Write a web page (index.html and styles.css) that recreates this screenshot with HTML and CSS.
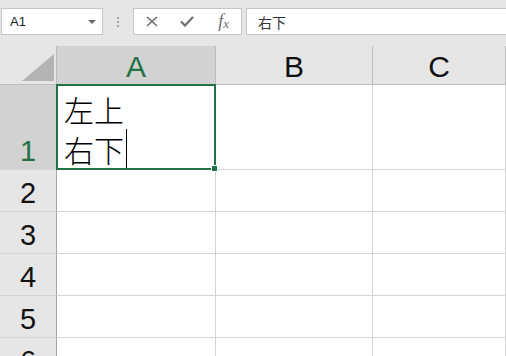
FILE: index.html
```html
<!DOCTYPE html>
<html lang="ja">
<head>
    <meta charset="UTF-8">
    <meta name="viewport" content="width=device-width, initial-scale=1.0">
    <title>Book1 - Excel</title>
    <link rel="stylesheet" href="styles.css">
</head>
<body>
    <div class="toolbar">
        <div class="name-box">
            <span>A1</span>
            <span class="arrow"></span>
        </div>
        <div class="grip"><i></i><i></i><i></i></div>
        <div class="fx-buttons">
            <span class="btn">
                <svg width="12" height="11" viewBox="0 0 12 11"><path d="M1 1 L11 10 M11 1 L1 10" stroke="#6e6e6e" stroke-width="1.6" fill="none"/></svg>
            </span>
            <span class="btn">
                <svg width="14" height="11" viewBox="0 0 14 11"><path d="M1 5.5 L5 9.5 L13 1" stroke="#6e6e6e" stroke-width="2.2" fill="none"/></svg>
            </span>
            <span class="btn fx"><i>f</i><i class="x">x</i></span>
        </div>
        <div class="formula">右下</div>
    </div>

    <div class="sheet">
        <div class="corner"><span class="triangle"></span></div>
        <div class="col-head active">A</div>
        <div class="col-head">B</div>
        <div class="col-head">C</div>

        <div class="row-head active">1</div>
        <div class="cell a1">
            左上<br>右下<span class="caret"></span>
            <div class="selection"></div>
            <div class="handle"></div>
        </div>
        <div class="cell"></div>
        <div class="cell"></div>

        <div class="row-head">2</div>
        <div class="cell"></div>
        <div class="cell"></div>
        <div class="cell"></div>

        <div class="row-head">3</div>
        <div class="cell"></div>
        <div class="cell"></div>
        <div class="cell"></div>

        <div class="row-head">4</div>
        <div class="cell"></div>
        <div class="cell"></div>
        <div class="cell"></div>

        <div class="row-head">5</div>
        <div class="cell"></div>
        <div class="cell"></div>
        <div class="cell"></div>

        <div class="row-head">6</div>
        <div class="cell"></div>
        <div class="cell"></div>
        <div class="cell"></div>
    </div>
</body>
</html>
```

FILE: styles.css
```css
body {
    margin: 0;
    padding: 0;
    height: 356px;
    overflow: hidden;
    background-color: #fff;
    font-family: "Liberation Sans", Arial, "Noto Sans CJK JP", sans-serif;
}
.toolbar {
    height: 46px;
    box-sizing: border-box;
    padding-top: 8px;
    background-color: #e6e6e6;
    display: flex;
    align-items: flex-start;
}
.name-box, .fx-buttons, .formula {
    height: 27px;
    box-sizing: border-box;
    background-color: #fff;
    border: 1px solid #c6c6c6;
    display: flex;
    align-items: center;
}
.name-box {
    width: 102px;
    margin-left: 1px;
    padding: 0 6px 0 8px;
    justify-content: space-between;
    font-size: 13px;
    color: #222;
}
.arrow {
    width: 0;
    height: 0;
    border-left: 4px solid transparent;
    border-right: 4px solid transparent;
    border-top: 4px solid #6a6a6a;
}
.grip {
    width: 30px;
    height: 27px;
    display: flex;
    flex-direction: column;
    align-items: center;
    justify-content: center;
    gap: 2px;
}
.grip i {
    width: 2px;
    height: 2px;
    background-color: #a6a6a6;
}
.fx-buttons {
    width: 109px;
    padding-left: 1px;
}
.btn {
    width: 36px;
    display: flex;
    justify-content: center;
    align-items: center;
}
.fx {
    font-family: "Liberation Serif", "Times New Roman", serif;
    color: #6e6e6e;
    font-size: 18px;
    padding-left: 2px;
}
.fx .x {
    font-size: 13px;
    margin-top: 4px;
}
.formula {
    flex: 1;
    margin-left: 4px;
    border-right: none;
    padding-left: 11px;
    font-family: "Noto Sans CJK JP", sans-serif;
    font-size: 14px;
    color: #333;
}

.sheet {
    display: grid;
    grid-template-columns: 57px 159px 157px 1fr;
    grid-template-rows: 39px 85px repeat(5, 42px);
}
.corner, .col-head, .row-head, .cell {
    box-sizing: border-box;
    border-right: 1px solid #d4d4d4;
    border-bottom: 1px solid #d4d4d4;
}
.corner {
    background-color: #e6e6e6;
    border-right-color: #bdbdbd;
    border-bottom-color: #bdbdbd;
    display: flex;
    justify-content: flex-end;
    align-items: flex-end;
    padding: 0 2px 3px 0;
}
.triangle {
    width: 32px;
    height: 27px;
    background-color: #b4b4b4;
    clip-path: polygon(100% 0, 100% 100%, 0 100%);
}
.col-head {
    background-color: #e6e6e6;
    border-right-color: #bdbdbd;
    border-bottom-color: #bdbdbd;
    display: flex;
    justify-content: center;
    align-items: flex-end;
    padding-bottom: 2px;
    font-size: 30px;
    line-height: 1;
    color: #111;
}
.row-head {
    background-color: #e6e6e6;
    border-right-color: #a6a6a6;
    display: flex;
    justify-content: center;
    align-items: flex-end;
    padding-bottom: 3px;
    font-size: 29px;
    line-height: 1;
    color: #111;
}
.active {
    background-color: #d2d2d2;
    color: #217346;
}
.a1 {
    position: relative;
    padding: 4px 0 0 7px;
    font-family: "Noto Sans CJK JP", sans-serif;
    font-weight: 300;
    font-size: 30px;
    line-height: 40px;
    color: #000;
}
.caret {
    display: inline-block;
    width: 1px;
    height: 39px;
    margin-left: 2px;
    vertical-align: top;
    background-color: #000;
}
.selection {
    position: absolute;
    top: -1px;
    left: -1px;
    right: -1px;
    bottom: -1px;
    border: 2px solid #217346;
}
.handle {
    position: absolute;
    right: -3px;
    bottom: -3px;
    width: 5px;
    height: 5px;
    background-color: #217346;
    border: 1px solid #fff;
}
```
